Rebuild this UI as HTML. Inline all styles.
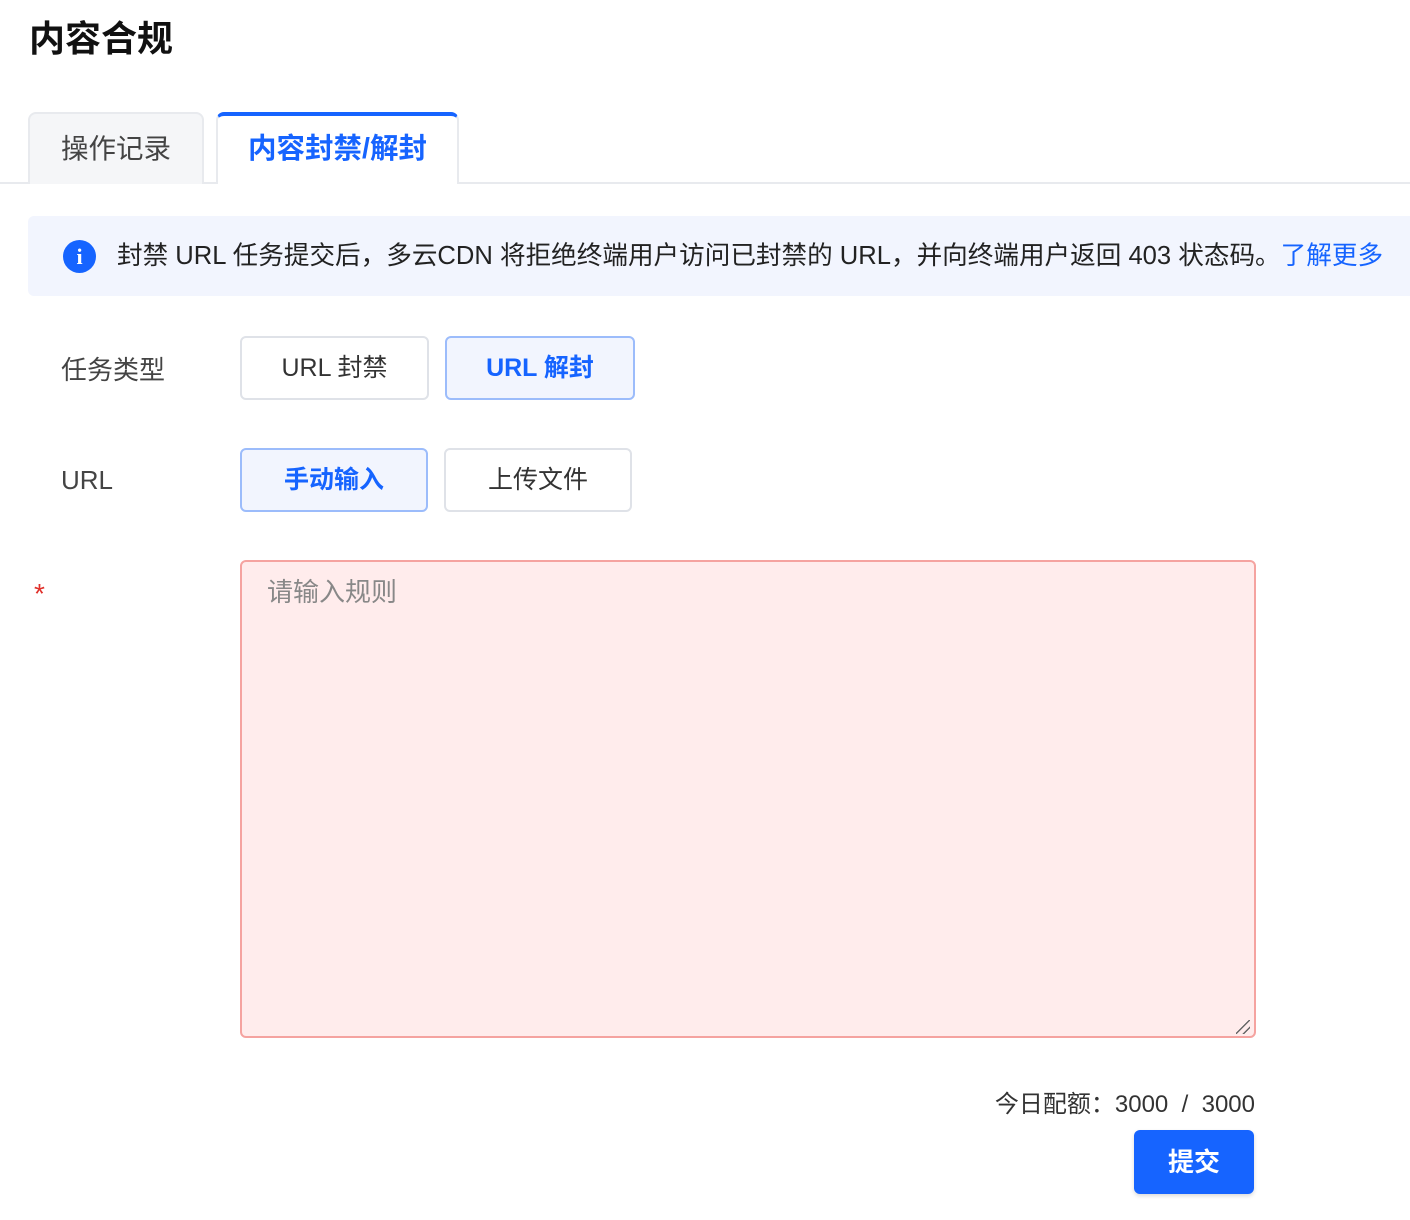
<!DOCTYPE html>
<html><head><meta charset="utf-8"><style>
*{box-sizing:border-box;margin:0;padding:0}
body{width:1410px;height:1220px;background:#fff;font-family:"Liberation Sans","Noto Sans CJK SC",sans-serif;color:#333;position:relative;overflow:hidden}
.a{position:absolute}
.title{left:29px;top:15px;font-size:36px;font-weight:bold;color:#111;line-height:48px}
.tab{top:112px;height:72px;line-height:70px;text-align:center;border:2px solid #e8eaee;border-bottom:none;border-radius:8px 8px 0 0}
.line{left:0;top:182px;width:1410px;height:2px;background:#e8eaee}
.info{left:28px;top:216px;width:1400px;height:80px;background:#f2f5fe;border-radius:6px;font-size:25.6px;line-height:80px;padding-left:89px;white-space:nowrap;color:#222}
.btn{height:64px;font-size:25px;line-height:60px;text-align:center;border:2px solid #dfe2e8;border-radius:6px;background:#fff;color:#333}
.on{background:#f2f5fe;border-color:#9cbcfb;color:#1664ff;font-weight:bold}
.lbl{left:61px;font-size:26px;color:#444}
</style></head><body>
<div class="a title">内容合规</div>
<div class="a line"></div>
<div class="a tab" style="left:28px;width:176px;background:#f5f6f8;color:#444;font-size:27.5px">操作记录</div>
<div class="a tab" style="left:216px;width:243px;background:#fff;color:#1664ff;font-weight:bold;font-size:28.5px;border-top:4px solid #1664ff;line-height:66px;height:72px">内容封禁/解封</div>
<div class="a info">封禁 URL 任务提交后，多云CDN 将拒绝终端用户访问已封禁的 URL，并向终端用户返回 403 状态码。<span style="color:#1664ff">了解更多</span></div>
<div class="a" style="left:63px;top:240px;width:33px;height:33px;border-radius:50%;background:#1664ff;color:#fff;font-weight:bold;font-size:22px;line-height:33px;text-align:center;font-family:'Liberation Serif',serif">i</div>
<div class="a lbl" style="top:350px">任务类型</div>
<div class="a btn" style="left:240px;top:336px;width:189px">URL 封禁</div>
<div class="a btn on" style="left:445px;top:336px;width:190px">URL 解封</div>
<div class="a lbl" style="top:465px">URL</div>
<div class="a btn on" style="left:240px;top:448px;width:188px">手动输入</div>
<div class="a btn" style="left:444px;top:448px;width:188px">上传文件</div>
<div class="a" style="left:34px;top:578px;color:#e0302a;font-size:28px">*</div>
<div class="a" style="left:240px;top:560px;width:1016px;height:478px;background:#ffecec;border:2px solid #f5a3a0;border-radius:6px;padding:10px 25px;font-size:26px;color:#888">请输入规则</div>
<div class="a" style="left:1236px;top:1020px;width:14px;height:14px;background:linear-gradient(135deg,transparent 45%,#666 45%,#666 52%,transparent 52%,transparent 72%,#666 72%,#666 80%,transparent 80%)"></div>
<div class="a" style="right:155px;top:1084px;font-size:24px;color:#333;white-space:nowrap">今日配额：3000 &nbsp;/&nbsp; 3000</div>
<div class="a" style="left:1134px;top:1130px;width:120px;height:64px;background:#1664ff;border-radius:6px;color:#fff;font-size:26px;line-height:64px;text-align:center;font-weight:bold;box-shadow:0 2px 4px rgba(0,0,0,.15)">提交</div>
</body></html>
